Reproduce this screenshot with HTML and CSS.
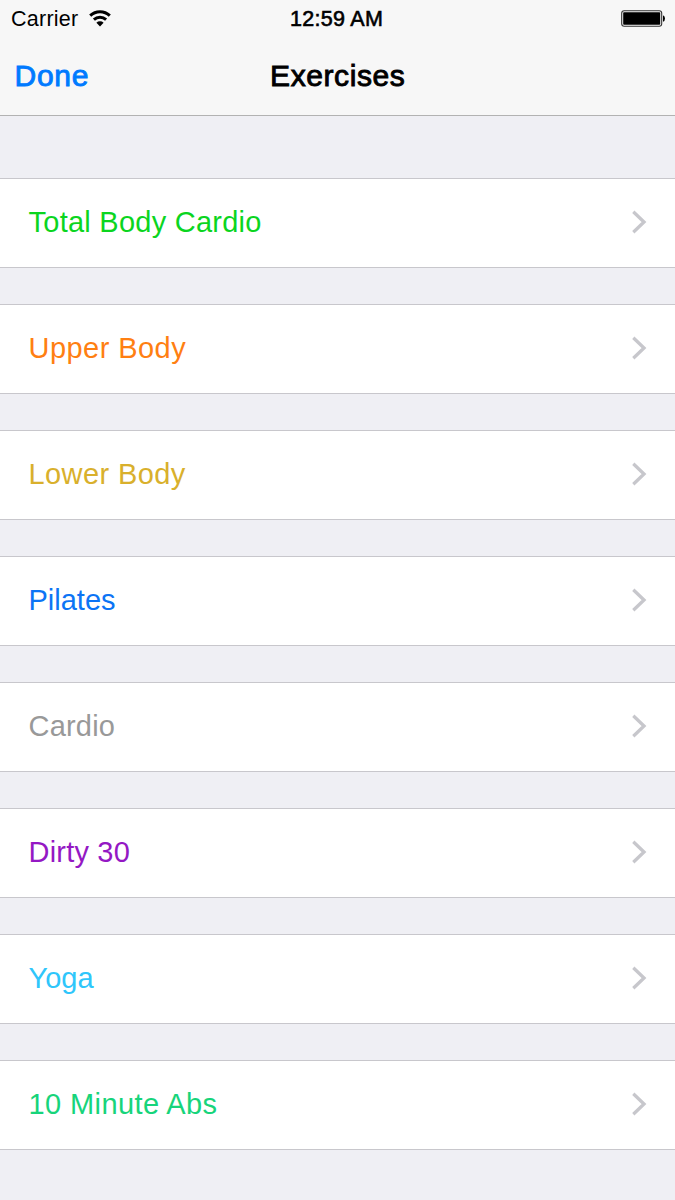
FILE: index.html
```html
<!DOCTYPE html>
<html lang="en">
<head>
<meta charset="utf-8">
<title>Exercises</title>
<link rel="stylesheet" href="styles.css">
</head>
<body>
<svg class="symbols" width="0" height="0" aria-hidden="true">
  <symbol id="chevron" viewBox="0 0 16 24"><path d="M1.3 1.8 L12 12 L1.3 22.2" fill="none" stroke="#c7c7cc" stroke-width="3.3"/></symbol>
</svg>
<header class="top">
  <div class="status">
    <div class="carrier"><span class="carrier-name">Carrier</span>
      <svg class="wifi" width="22" height="17" viewBox="0 0 22 17"><g fill="none" stroke="#000" stroke-width="3"><path d="M1.2 5.7 A14.2 14.2 0 0 1 20.8 5.7"/><path d="M4.9 9.6 A9 9 0 0 1 17.1 9.6"/></g><path d="M7.4 12.7 A5.2 5.2 0 0 1 14.6 12.7 L11 16.4 Z"/></svg>
    </div>
    <span class="time">12:59 AM</span>
    <div class="battery">
      <svg width="44" height="17" viewBox="0 0 44 17"><rect x=".7" y=".7" width="40" height="15.6" rx="2.5" fill="none" stroke="#333" stroke-width="1.1"/><rect x="2.2" y="2.2" width="37" height="12.6" rx=".8"/><path d="M42 5.3 Q44 6 44 8.5 Q44 11 42 11.7 Z"/></svg>
    </div>
  </div>
  <nav class="nav">
    <a class="done">Done</a>
    <h1 class="title">Exercises</h1>
    <span></span>
  </nav>
</header>
<main class="list">
  <a class="row total"><span class="label">Total Body Cardio</span><svg class="chevron"><use href="#chevron"/></svg></a>
  <a class="row upper"><span class="label">Upper Body</span><svg class="chevron"><use href="#chevron"/></svg></a>
  <a class="row lower"><span class="label">Lower Body</span><svg class="chevron"><use href="#chevron"/></svg></a>
  <a class="row pilates"><span class="label">Pilates</span><svg class="chevron"><use href="#chevron"/></svg></a>
  <a class="row cardio"><span class="label">Cardio</span><svg class="chevron"><use href="#chevron"/></svg></a>
  <a class="row dirty"><span class="label">Dirty 30</span><svg class="chevron"><use href="#chevron"/></svg></a>
  <a class="row yoga"><span class="label">Yoga</span><svg class="chevron"><use href="#chevron"/></svg></a>
  <a class="row abs"><span class="label">10 Minute Abs</span><svg class="chevron"><use href="#chevron"/></svg></a>
</main>
</body>
</html>
```
FILE: styles.css
```css
* { box-sizing: border-box; }
body {
  margin: 0;
  height: 1200px;
  overflow: hidden;
  background: #efeff4;
  font-family: "Liberation Sans", Arial, sans-serif;
}
.symbols { display: none; }
.top {
  height: 116px;
  background: #f7f7f7;
  border-bottom: 1px solid #b2b2b2;
}
.status {
  display: grid;
  grid-template-columns: 1fr auto 1fr;
  align-items: center;
  height: 38px;
  padding: 0 10px 0 11px;
  font-size: 21.5px;
}
.carrier { display: flex; align-items: center; gap: 10.5px; }
.carrier-name { letter-spacing: .25px; }
.wifi { display: block; margin-bottom: 2px; }
.time { -webkit-text-stroke: .6px #000; letter-spacing: .3px; margin-right: 3px; }
.battery { display: flex; justify-content: flex-end; padding-bottom: 1px; }
.nav {
  display: grid;
  grid-template-columns: 1fr auto 1fr;
  align-items: center;
  height: 76px;
  padding: 0 14px 1px 14.5px;
  font-size: 30px;
}
.done { color: #007aff; -webkit-text-stroke: .9px #007aff; letter-spacing: .75px; }
.title { margin: 0; font-size: 30px; font-weight: 400; -webkit-text-stroke: .9px #000; letter-spacing: .6px; }
.list { display: flex; flex-direction: column; gap: 36px; padding-top: 62px; }
.row {
  display: flex;
  align-items: center;
  justify-content: space-between;
  height: 90px;
  padding: 0 27px 2px 28.5px;
  background: #fff;
  border: solid #c8c7cc;
  border-width: 1px 0;
  font-size: 29px;
}
.chevron { width: 16px; height: 24px; }
.total { color: #0bd51f; letter-spacing: .25px; }
.upper { color: #ff7f12; letter-spacing: .45px; }
.lower { color: #d9b02c; letter-spacing: .4px; }
.pilates { color: #0c74f5; }
.cardio { color: #999; letter-spacing: .2px; }
.dirty { color: #9418c4; letter-spacing: .2px; }
.yoga { color: #2fc6fb; }
.abs { color: #17d47b; letter-spacing: .4px; }
```
